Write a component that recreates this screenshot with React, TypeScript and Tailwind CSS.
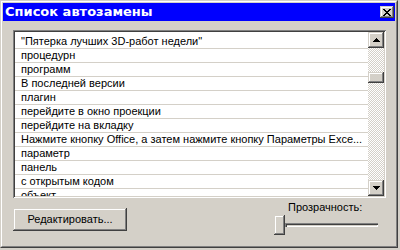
import React from 'react';

const raised =
    'shadow-[inset_-1px_-1px_#404040,inset_1px_1px_#d4d0c8,inset_-2px_-2px_#808080,inset_2px_2px_#ffffff]';

const items = [
    '"Пятерка лучших 3D-работ недели"',
    'процедурн',
    'программ',
    'В последней версии',
    'плагин',
    'перейдите в окно проекции',
    'перейдите на вкладку',
    'Нажмите кнопку Office, а затем нажмите кнопку Параметры Exce...',
    'параметр',
    'панель',
    'с открытым кодом',
    'объект',
];

function CloseGlyph() {
    return (
        <svg width="8" height="7" viewBox="0 0 8 7" shapeRendering="crispEdges">
            <path
                fill="#000"
                d="M0 0h2v1H0zM6 0h2v1H6zM1 1h2v1H1zM5 1h2v1H5zM2 2h4v1H2zM3 3h2v1H3zM2 4h4v1H2zM1 5h2v1H1zM5 5h2v1H5zM0 6h2v1H0zM6 6h2v1H6z"
            />
        </svg>
    );
}

function Arrow({ down }: { down?: boolean }) {
    return (
        <svg width="7" height="4" viewBox="0 0 7 4" shapeRendering="crispEdges">
            <path
                fill="#000"
                d={down ? 'M0 0h7v1H0zM1 1h5v1H1zM2 2h3v1H2zM3 3h1v1H3z' : 'M3 0h1v1H3zM2 1h3v1H2zM1 2h5v1H1zM0 3h7v1H0z'}
            />
        </svg>
    );
}

export default function App() {
    return (
        <div className="w-[400px] h-[250px] bg-[#d4d0c8] font-['Liberation_Sans',Arial,sans-serif] text-black">
            <div className="w-[398px] h-[248px] border border-t-[#d4d0c8] border-l-[#d4d0c8] border-r-[#404040] border-b-[#404040]">
                <div className="h-full border border-t-white border-l-white border-r-[#808080] border-b-[#808080] p-px flex flex-col">

                    {/* Title bar */}
                    <div className="h-[18px] bg-[#0000ff] flex items-center justify-between pl-[2px] pr-[1px]">
                        <span className="text-white font-bold text-[13px] leading-[16px] font-['DejaVu_Sans',sans-serif]">
                            Список автозамены
                        </span>
                        <div className={`w-[14px] h-[12px] bg-[#d4d0c8] flex items-center justify-center ${raised}`}>
                            <CloseGlyph />
                        </div>
                    </div>

                    {/* Content */}
                    <div className="flex-1 pl-[10px] pt-[9px]">
                        <div className="w-[373px] h-[168px] p-[2px] flex bg-[#d4d0c8] shadow-[inset_1px_1px_#808080,inset_-1px_-1px_#ffffff,inset_2px_2px_#404040,inset_-2px_-2px_#d4d0c8]">
                            <div className="flex-1 bg-white overflow-hidden pt-[3px]">
                                {items.map((item) => (
                                    <div
                                        key={item}
                                        className="h-[14px] border-b border-[#d4d0c8] pl-[6px] text-[11px] leading-[13px] whitespace-nowrap overflow-hidden"
                                    >
                                        {item}
                                    </div>
                                ))}
                            </div>
                            <div className="w-[16px] flex flex-col">
                                <div className={`h-[16px] bg-[#d4d0c8] flex items-center justify-center ${raised}`}>
                                    <Arrow />
                                </div>
                                <div className="flex-1 bg-[image:repeating-conic-gradient(#d4d0c8_0_25%,#ffffff_0_50%)] bg-size-[2px_2px]">
                                    <div className={`mt-[24px] h-[11px] bg-[#d4d0c8] ${raised}`} />
                                </div>
                                <div className={`h-[16px] bg-[#d4d0c8] flex items-center justify-center ${raised}`}>
                                    <Arrow down />
                                </div>
                            </div>
                        </div>

                        {/* Bottom row */}
                        <div className="flex items-start mt-[3px]">
                            <div className={`mt-[7px] w-[114px] h-[23px] bg-[#d4d0c8] flex items-center justify-center text-[11px] ${raised}`}>
                                Редактировать...
                            </div>
                            <div className="ml-auto mr-[17px] w-[104px] flex flex-col">
                                <div className="pl-[14px] h-[13px] text-[11px] leading-[13px]">Прозрачность:</div>
                                <div className="mt-px flex items-center">
                                    <div className={`w-[11px] h-[20px] bg-[#d4d0c8] ${raised}`} />
                                    <div className="flex-1 h-[4px] bg-[#d4d0c8] shadow-[inset_1px_1px_#808080,inset_2px_2px_#404040,inset_-1px_-1px_#ffffff]" />
                                </div>
                            </div>
                        </div>
                    </div>
                </div>
            </div>
        </div>
    );
}
